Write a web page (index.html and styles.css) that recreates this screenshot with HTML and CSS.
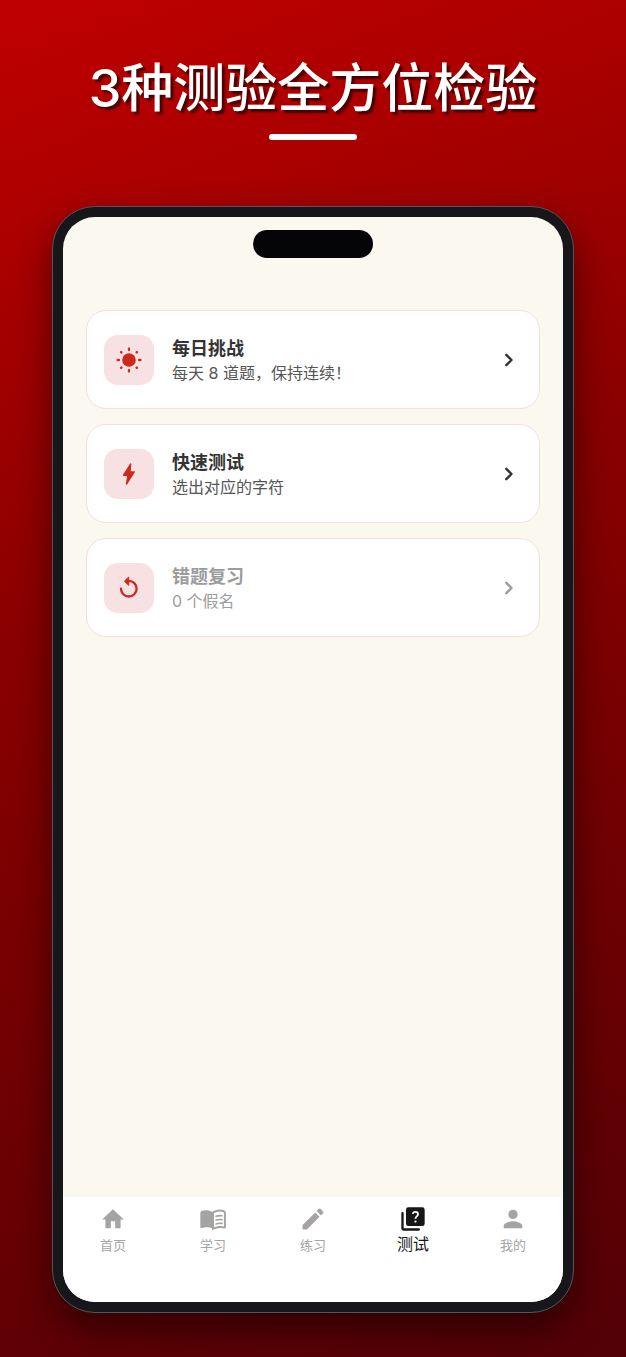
FILE: index.html
```
<!DOCTYPE html>
<html lang="zh-CN">
<head>
    <meta charset="UTF-8">
    <meta name="viewport" content="width=device-width, initial-scale=1.0">
    <title>3种测验全方位检验</title>
    <link rel="stylesheet" href="styles.css">
</head>
<body>
    <header class="headline">
        <h1>3种测验全方位检验</h1>
        <div class="underline"></div>
    </header>
    <div class="phone">
        <div class="screen">
            <div class="status-bar">
                <div class="island"></div>
            </div>
            <main class="quiz-list">
                <button type="button" class="card">
                    <span class="card-icon">
                        <svg viewBox="0 0 26 26" width="26" height="26">
                            <circle cx="13" cy="13" r="6.8" fill="currentColor"/>
                            <g stroke="currentColor" stroke-width="2.4" stroke-linecap="round">
                                <path d="M13 1.7v1M13 23.3v1M1.7 13h1.2M23.1 13h1.2M5.1 5.1l.3.3M20.6 20.6l.3.3M5.1 20.9l.3-.3M20.6 5.4l.3-.3"/>
                            </g>
                        </svg>
                    </span>
                    <span class="card-text">
                        <span class="card-title">每日挑战</span>
                        <span class="card-desc">每天 8 道题，保持连续！</span>
                    </span>
                    <svg class="chevron" viewBox="0 0 24 24" width="24" height="24"><path stroke-width="2.4" d="M9.3 6.8l5.2 5.2-5.2 5.2"/></svg>
                </button>
                <button type="button" class="card">
                    <span class="card-icon">
                        <svg viewBox="0 0 26 26" width="26" height="26">
                            <path d="M14.6 3L7.6 14.2h4.4L10.5 23 18.2 10.9h-4.2z" fill="currentColor" stroke="currentColor" stroke-width="1.4" stroke-linejoin="round"/>
                        </svg>
                    </span>
                    <span class="card-text">
                        <span class="card-title">快速测试</span>
                        <span class="card-desc">选出对应的字符</span>
                    </span>
                    <svg class="chevron" viewBox="0 0 24 24" width="24" height="24"><path stroke-width="2.4" d="M9.3 6.8l5.2 5.2-5.2 5.2"/></svg>
                </button>
                <button type="button" class="card" disabled>
                    <span class="card-icon">
                        <svg viewBox="0 0 26 26" width="26" height="26">
                            <path d="M12.8 5.9a7.8 7.8 0 1 1-7.8 7.8" fill="none" stroke="currentColor" stroke-width="2.3" stroke-linecap="round"/>
                            <path d="M12.7 2v8.4L8.4 6.2z" fill="currentColor" stroke="currentColor" stroke-linejoin="round"/>
                        </svg>
                    </span>
                    <span class="card-text">
                        <span class="card-title">错题复习</span>
                        <span class="card-desc">0 个假名</span>
                    </span>
                    <svg class="chevron" viewBox="0 0 24 24" width="24" height="24"><path stroke-width="2.4" d="M9.3 6.8l5.2 5.2-5.2 5.2"/></svg>
                </button>
            </main>
            <nav class="tab-bar">
                <a href="#" class="tab">
                    <svg viewBox="0 0 24 24" width="26" height="26"><path d="M10 20.5v-6.5h4v6.5h5v-8h3L12 3 2 12.5h3v8z"/></svg>
                    <span>首页</span>
                </a>
                <a href="#" class="tab">
                    <svg viewBox="0 0 28 28" width="28" height="28">
                        <path d="M14 7.3C10.5 4.8 5.5 4.8 3 5.8q-1.7.5-1.7 2.2v13.8q0 1.7 1.7 1.2c3-1 7.5-1 11 .8z"/>
                        <path d="M14 7.3c3.5-1.7 8.5-1.9 11-1 .7.3.9.8.9 1.7v13.7c0 .8-.2.9-.9.7-3.5-.9-7.5-.5-11 1.2z" fill="none" stroke="currentColor" stroke-width="2"/>
                        <path d="M17 11.3c1.8-.6 4-.8 6-.5M17 15.1c1.8-.6 4-.8 6-.5M17 18.9c1.800-.6 4-.8 6-.5" fill="none" stroke="currentColor" stroke-width="1.6" stroke-linecap="round"/>
                    </svg>
                    <span>学习</span>
                </a>
                <a href="#" class="tab">
                    <svg viewBox="0 0 24 24" width="28" height="28"><path d="M3 17.7V20q0 1 1 1h2.3q.4 0 .7-.3L17.6 10.1l-3.7-3.7L3.3 17q-.3.3-.3.7zM20.7 7a1 1 0 0 0 0-1.4l-2.3-2.3a1 1 0 0 0-1.4 0l-1.9 1.9 3.7 3.7z"/></svg>
                    <span>练习</span>
                </a>
                <a href="#" class="tab active">
                    <svg viewBox="0 0 24 24" width="28" height="28">
                        <path d="M4 7q0-1-1-1T2 7v13c0 1.1.9 2 2 2h13q1 0 1-1t-1-1H4z"/>
                        <path d="M8 2h12a2 2 0 0 1 2 2v12a2 2 0 0 1-2 2H8a2 2 0 0 1-2-2V4a2 2 0 0 1 2-2z"/>
                        <path d="M11.8 7.6c.4-2.300 4.500-2.300 4.500.3 0 1.900-2.200 1.900-2.200 3.900" fill="none" stroke="#fff" stroke-width="1.500"/>
                        <circle cx="14.100" cy="14.200" r="1" fill="#fff"/>
                    </svg>
                    <span>测试</span>
                </a>
                <a href="#" class="tab">
                    <svg viewBox="0 0 24 24" width="28" height="28"><path d="M12 12a4 4 0 1 0 0-8 4 4 0 0 0 0 8zm0 2c-2.670 0-8 1.340-8 4v1q0 1 1 1h14q1 0 1-1v-1c0-2.660-5.330-4-8-4z"/></svg>
                    <span>我的</span>
                </a>
            </nav>
        </div>
    </div>
</body>
</html>
```
FILE: styles.css
```
* {
    box-sizing: border-box;
}

body {
    font-family: Inter, "Noto Sans CJK SC", sans-serif;
    background: linear-gradient(160deg, #c00000 0%, #8b0000 40%, #520006 100%);
    margin: 0;
    min-height: 100vh;
    padding: 48px 52px 44px;
    display: flex;
    flex-direction: column;
}

.headline {
    display: flex;
    flex-direction: column;
    align-items: center;
    margin-bottom: 66px;
}

h1 {
    margin: 0;
    font-size: 52px;
    line-height: 82px;
    font-weight: 500;
    color: #fff;
    text-shadow: 3px 3px 2px rgba(0, 0, 0, 0.6);
    white-space: nowrap;
}

.underline {
    width: 88px;
    height: 6px;
    margin-top: 4px;
    border-radius: 3px;
    background: #fff;
}

.phone {
    flex: 1;
    display: flex;
    padding: 10px;
    background: #17171b;
    border: 1px solid #55555a;
    border-radius: 43px;
    box-shadow: 0 16px 36px rgba(0, 0, 0, 0.5);
}

.screen {
    flex: 1;
    display: flex;
    flex-direction: column;
    overflow: hidden;
    border-radius: 32px;
    background: #fbf8f0;
}

.status-bar {
    display: flex;
    justify-content: center;
    height: 93px;
    padding-top: 13px;
}

.island {
    width: 120px;
    height: 28px;
    border-radius: 14px;
    background: #050507;
}

.quiz-list {
    flex: 1;
    display: flex;
    flex-direction: column;
    gap: 15px;
    padding: 0 23px;
}

.card {
    display: flex;
    align-items: center;
    gap: 18px;
    min-height: 99px;
    padding: 0 17px;
    border: 1px solid #f8dddd;
    border-radius: 20px;
    background: #fff;
    color: #333;
    font-family: inherit;
    text-align: left;
    cursor: pointer;
}

.card-icon {
    display: flex;
    align-items: center;
    justify-content: center;
    width: 50px;
    height: 50px;
    border-radius: 14px;
    background: #f7e1e2;
    color: #cb2a1d;
}

.card-text {
    flex: 1;
    display: flex;
    flex-direction: column;
    padding-top: 2px;
}

.card-title {
    font-size: 18px;
    line-height: 24px;
    font-weight: 700;
}

.card-desc {
    font-size: 16px;
    line-height: 24px;
    color: #555;
}

.chevron {
    margin-right: 1px;
    fill: none;
    stroke: currentColor;
    stroke-linecap: round;
    stroke-linejoin: round;
}

.card:disabled,
.card:disabled .card-desc {
    color: #9c9c9c;
    cursor: default;
}

.tab-bar {
    display: flex;
    height: 105px;
    padding-top: 8px;
    background: #fff;
}

.tab {
    flex: 1;
    display: flex;
    flex-direction: column;
    align-items: center;
    font-size: 13px;
    line-height: 24px;
    color: #a6a4a3;
    text-decoration: none;
}

.tab svg {
    height: 28px;
    fill: currentColor;
}

.tab.active {
    font-size: 16px;
    line-height: 22px;
    color: #171717;
}
```
